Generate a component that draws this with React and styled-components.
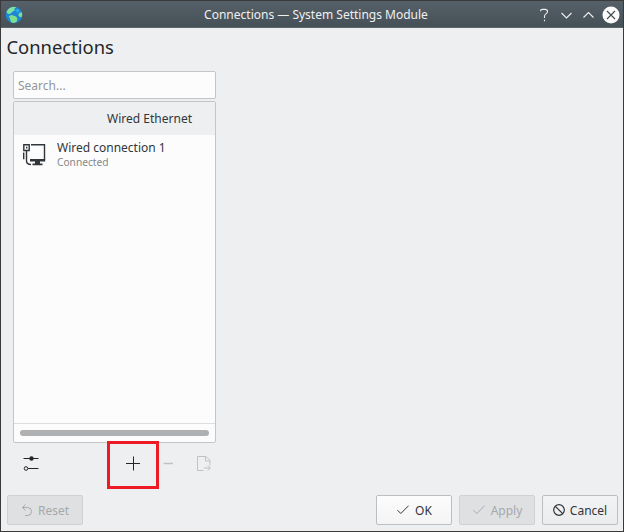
import React from 'react';
import styled, { createGlobalStyle } from 'styled-components';

const GlobalStyle = createGlobalStyle`
  * {
    box-sizing: border-box;
  }
  body {
    margin: 0;
    font-family: 'Noto Sans', sans-serif;
    font-size: 12px;
    color: #31363b;
  }
  svg {
    display: block;
    flex-shrink: 0;
  }
`;

const Window = styled.div`
  display: flex;
  flex-direction: column;
  width: 624px;
  height: 532px;
  border: 1px solid #3b3a3a;
  background: #eeeff1;
  overflow: hidden;
`;

const TitleBar = styled.header`
  display: grid;
  grid-template-columns: 97px 1fr 90px;
  align-items: center;
  height: 27px;
  padding: 0 3px 0 4px;
  background: linear-gradient(#566068, #465057);
  border-bottom: 1px solid #5d666c;
  color: #eff0f1;
`;

const WindowTitle = styled.div`
  padding-top: 1px;
  text-align: center;
  line-height: 26px;
  white-space: nowrap;
`;

const WindowControls = styled.div`
  display: flex;
  justify-content: flex-end;
`;

const Heading = styled.h1`
  margin: 6px 0 0 5.5px;
  font-size: 18.4px;
  font-weight: 400;
  line-height: 26px;
  color: #232629;
`;

const Sidebar = styled.section`
  display: flex;
  flex-direction: column;
  width: 203px;
  margin: 11px 0 0 12px;
`;

const SearchInput = styled.input`
  height: 28px;
  padding: 0 4px;
  border: 1px solid #c3c6c8;
  border-radius: 2px;
  background: #fcfcfc;
  font: inherit;
  outline: none;
  &::placeholder {
    color: #929799;
    opacity: 1;
  }
`;

const ConnectionList = styled.div`
  display: flex;
  flex-direction: column;
  height: 342px;
  margin-top: 2px;
  border: 1px solid #c3c6c8;
  border-radius: 2px;
  background: #fcfcfc;
`;

const GroupHeader = styled.div`
  height: 33px;
  padding-right: 23px;
  background: #eeeff0;
  line-height: 33px;
  text-align: right;
`;

const Connection = styled.div`
  display: flex;
  flex: 1;
  padding: 4px 8px;
  svg {
    margin-top: 3px;
  }
`;

const ConnectionText = styled.div`
  margin-left: 11px;
`;

const ConnectionName = styled.div`
  line-height: 17px;
`;

const ConnectionStatus = styled.div`
  font-size: 10.2px;
  line-height: 13px;
  color: #85888b;
`;

const ScrollArea = styled.div`
  display: flex;
  align-items: center;
  height: 19px;
  padding: 0 6px;
  border-top: 1px solid #dcdedf;
`;

const ScrollThumb = styled.div`
  width: 100%;
  height: 6px;
  border-radius: 3px;
  background: #aeb0b1;
`;

const ListActions = styled.div`
  display: flex;
  align-items: center;
  height: 40px;
  padding: 0 3px 0 10px;
`;

const ToolButton = styled.button`
  position: relative;
  display: flex;
  padding: 0;
  border: 0;
  background: none;
  margin-left: ${({ $gap }) => $gap || 0}px;
  color: ${({ disabled }) => (disabled ? '#bfc1c3' : '#232629')};
`;

const Highlight = styled.span`
  position: absolute;
  top: -14px;
  left: -18px;
  width: 52px;
  height: 48px;
  border: 3px solid #ed1c24;
`;

const Footer = styled.footer`
  display: flex;
  gap: 7px;
  margin-top: auto;
  padding: 0 5px 6px 6px;
`;

const Button = styled.button`
  display: flex;
  align-items: center;
  justify-content: center;
  gap: 4px;
  width: 76px;
  height: 30px;
  padding: 0 1px 0 0;
  border: 1px solid ${({ disabled }) => (disabled ? '#cfd1d3' : '#bcbec0')};
  border-radius: 2px;
  background: ${({ disabled, $plain }) =>
    disabled ? '#dfe0e2' : $plain ? 'linear-gradient(#f2f3f4, #ebecee)' : 'linear-gradient(#fcfcfc, #f4f4f5)'};
  color: ${({ disabled }) => (disabled ? '#a6a9ab' : '#31363b')};
  font: inherit;
  &:first-child {
    margin-right: auto;
  }
`;

const Icon = ({ size = 16, children, ...rest }) => (
  <svg width={size} height={size} viewBox={`0 0 ${size} ${size}`} fill="none" stroke="currentColor" {...rest}>
    {children}
  </svg>
);

const GlobeIcon = () => (
  <Icon size={18} stroke="none">
    <circle cx="9" cy="9" r="8.3" fill="#1d86d8" />
    <path d="M1.5 6Q3.5 1 9 .8l2.4.6-2.2 1.4.6 1.4L7.6 5.5 5.6 7.6 3 8z" fill="#7fe3a0" />
    <path d="M3.8 10l3-1 4.2 1.6 1.4 2-.8 3.2-2.6 1.2-3-.8-.8-3z" fill="#7ee08f" />
    <path d="M14 7.2l2.6-1.2.7 3-1 2.6-1.8-.8-1.3-1.6z" fill="#7ee08f" />
    <path d="M10 4.5l2.5-2 2.5 2L12.5 7z" fill="#29a8e8" />
  </Icon>
);

const WiredIcon = () => (
  <Icon size={24} strokeWidth="1.4">
    <path d="M9 2.7h13.5v15M1.8 2.7h5.4v5.8H1.8zM1.7 10.5v6.7M4.5 9v9.5c0 2.5 1.5 4 4.5 4" />
    <path d="M4 4.8h1.4v1.8H4zM8 17h15.2v2.4H8zM13 19h5v2.6h2.5v1.7H10.5v-1.7H13z" fill="currentColor" stroke="none" />
  </Icon>
);

const CheckIcon = () => (
  <Icon>
    <path d="M2.5 8.2l3.3 3.3 7.8-7.8" />
  </Icon>
);

const App = () => {
  return (
    <>
      <GlobalStyle />
      <Window>
        <TitleBar>
          <GlobeIcon />
          <WindowTitle>Connections — System Settings Module</WindowTitle>
          <WindowControls>
            <svg width="84" height="18" viewBox="0 0 84 18" fill="none" stroke="#eff0f1" strokeWidth="1.1">
              <path d="M4.5 5.2q0-1.8 2-1.8h2.7q2.3 0 2.3 2.2 0 1.4-1.5 2.3Q8.5 8.8 8.5 10.2v1.8M8.5 13.8v1.5" />
              <path d="M25.5 7l5 5 5-5M47.5 11.5l5-5 5 5" />
              <circle cx="75" cy="9" r="8.5" fill="#fcfcfc" stroke="none" />
              <path d="M71 5l8 8M79 5l-8 8" stroke="#42494e" />
            </svg>
          </WindowControls>
        </TitleBar>
        <Heading>Connections</Heading>
        <Sidebar>
          <SearchInput placeholder="Search..." />
          <ConnectionList>
            <GroupHeader>Wired Ethernet</GroupHeader>
            <Connection>
              <WiredIcon />
              <ConnectionText>
                <ConnectionName>Wired connection 1</ConnectionName>
                <ConnectionStatus>Connected</ConnectionStatus>
              </ConnectionText>
            </Connection>
            <ScrollArea>
              <ScrollThumb />
            </ScrollArea>
          </ConnectionList>
          <ListActions>
            <ToolButton>
              <Icon>
                <path d="M.5 3.5h15M5 13.5h10.5" />
                <circle cx="8.5" cy="3.5" r="2.2" fill="currentColor" stroke="none" />
                <circle cx="3" cy="13.5" r="1.8" />
              </Icon>
            </ToolButton>
            <ToolButton $gap={86}>
              <Icon>
                <path d="M1 8.5h14M8.5 1.5v14" />
              </Icon>
              <Highlight />
            </ToolButton>
            <ToolButton $gap={20} disabled>
              <Icon strokeWidth="1.5">
                <path d="M2.5 8.5h9.5" />
              </Icon>
            </ToolButton>
            <ToolButton $gap={19} disabled>
              <Icon>
                <path d="M7.5 15.5h-6v-14H10l4 4v5M9.5 1.5V6H14M8 13h6M11.8 10.5l2.5 2.5-2.5 2.5" />
              </Icon>
            </ToolButton>
          </ListActions>
        </Sidebar>
        <Footer>
          <Button disabled>
            <Icon size={14}>
              <path d="M5.5 1.5l-3 3 3 3M2.5 4.5h5a4 4 0 0 1 0 8H5" />
            </Icon>
            Reset
          </Button>
          <Button>
            <CheckIcon />
            OK
          </Button>
          <Button disabled>
            <CheckIcon />
            Apply
          </Button>
          <Button $plain>
            <Icon size={14}>
              <circle cx="7" cy="7" r="5.3" strokeWidth="1.2" />
              <path d="M3.3 3.3l7.4 7.4" strokeWidth="1.2" />
            </Icon>
            Cancel
          </Button>
        </Footer>
      </Window>
    </>
  );
};

export default App;
